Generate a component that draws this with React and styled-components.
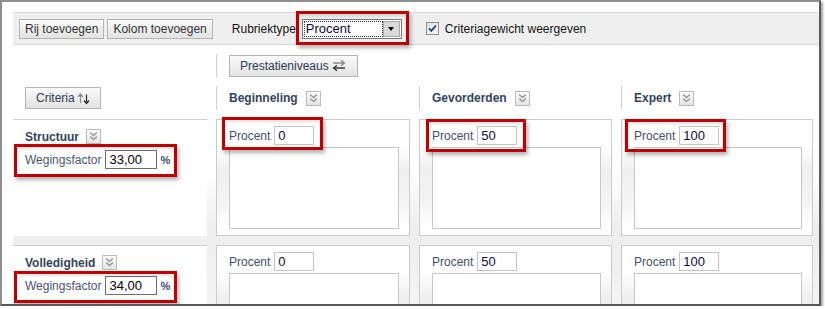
import React from "react";
import styled, { createGlobalStyle } from "styled-components";

const GlobalStyle = createGlobalStyle`
  html, body {
    margin: 0;
    padding: 0;
    background: #fff;
  }
  body {
    font-family: "Liberation Sans", Arial, sans-serif;
    font-size: 12px;
    color: #1a1a1a;
  }
`;

const COLS = "194px 194px 193px 192px";

// venster met donkere rand rechts/onder
const Frame = styled.div`
  box-sizing: border-box;
  width: 821px;
  height: 306px;
  border-top: 2px solid #8e8e8e;
  border-left: 2px solid #8e8e8e;
  border-right: 2px solid #5a5a5a;
  border-bottom: 2px solid #5a5a5a;
  box-shadow: 2px 2px 2px rgba(0, 0, 0, 0.35);
  overflow: hidden;
  background: #fff;
`;

const Toolbar = styled.div`
  margin: 10px 0 0 11px;
  height: 31px;
  display: flex;
  align-items: center;
  padding-left: 6px;
  background: #efefef;
  border-top: 1px solid #d8d8d8;
  border-bottom: 1px solid #d8d8d8;
`;

const Button = styled.button`
  box-sizing: border-box;
  height: ${(p) => p.$h || 20}px;
  padding: 0 ${(p) => p.$px || 5}px;
  margin-right: ${(p) => p.$mr || 0}px;
  display: inline-flex;
  align-items: center;
  gap: 2px;
  font: 12px "Liberation Sans", Arial, sans-serif;
  color: ${(p) => p.$color || "#333"};
  background: linear-gradient(#fafafa, #e3e3e3);
  border: 1px solid #b4b4b4;
  border-radius: 0;
  cursor: pointer;
`;

const ToolLabel = styled.span`
  margin-left: ${(p) => p.$ml || 0}px;
  margin-right: ${(p) => p.$mr || 0}px;
  color: #141414;
  white-space: nowrap;
`;

// rode markering (annotatie over de inhoud)
const Mark = styled.div`
  position: relative;
  display: flex;
  align-items: center;
  &::after {
    content: "";
    position: absolute;
    top: -${(p) => p.$i[0]}px;
    right: -${(p) => p.$i[1]}px;
    bottom: -${(p) => p.$i[2]}px;
    left: -${(p) => p.$i[3]}px;
    border: 3px solid #c00000;
    box-shadow: 2px 3px 4px rgba(0, 0, 0, 0.3), inset 1px 2px 3px rgba(0, 0, 0, 0.12);
    pointer-events: none;
  }
`;

const SelectBox = styled.div`
  box-sizing: border-box;
  width: 100px;
  height: 20px;
  display: flex;
  align-items: stretch;
  border: 1px solid #7a7a7a;
  background: #fff;
  padding: 1px;
`;

const SelectValue = styled.div`
  flex: 1;
  display: flex;
  align-items: center;
  padding-left: 2px;
  font-size: 13px;
  color: #0b0b3a;
  outline: 1px dotted #333;
  outline-offset: -1px;
`;

const SelectArrow = styled.div`
  width: 15px;
  display: flex;
  align-items: center;
  justify-content: center;
  background: #dadada;
  border: 1px solid #a8a8a8;
  &::before {
    content: "";
    border-left: 3.5px solid transparent;
    border-right: 3.5px solid transparent;
    border-top: 4px solid #000;
  }
`;

const CheckWrap = styled.span`
  display: inline-flex;
  margin-left: 24px;
  margin-right: 6px;
`;

const LevelsRow = styled.div`
  display: grid;
  grid-template-columns: ${COLS};
  column-gap: 9px;
  margin: 9px 0 0 11px;
`;

const HeadCell = styled.div`
  height: ${(p) => p.$h}px;
  display: flex;
  align-items: center;
  gap: 8px;
  padding-left: 12px;
  border-left: ${(p) => (p.$line ? "1px solid #cfcfcf" : "none")};
`;

const ColTitle = styled.span`
  font-weight: bold;
  color: #34435e;
`;

const RowGrid = styled.div`
  display: grid;
  grid-template-columns: ${COLS};
  grid-auto-rows: 117px;
  gap: 9px;
  margin: 9px 0 0 11px;
  background: linear-gradient(#fff 22%, #eeeeee 45%, #f3f3f3 75%, #fff 92%);
`;

const CriteriumCell = styled.div`
  background: #fff;
  border-top: 1px solid #cfcfcf;
  padding: 9px 0 0 12px;
`;

const CriteriumTitle = styled.div`
  height: 15px;
  display: flex;
  align-items: center;
  gap: 7px;
  font-weight: bold;
  color: #34435e;
`;

const WeightLine = styled(Mark)`
  margin-top: 6px;
  width: max-content;
  gap: 4px;
  color: #4a5572;
  &::after {
    display: ${(p) => (p.$on ? "block" : "none")};
  }
`;

const WeightInput = styled.input`
  box-sizing: border-box;
  width: 52px;
  height: 19px;
  padding: 0 3px;
  font: 13px "Liberation Sans", Arial, sans-serif;
  color: #000;
  border: 1px solid #6e6e6e;
`;

const Percent = styled.span`
  margin-left: -1px;
  font-size: 11px;
  font-weight: bold;
  color: #3b4a78;
`;

const LevelCell = styled.div`
  box-sizing: border-box;
  border: 1px solid #cbcbcb;
  padding: 6px 10px 0 12px;
  background: linear-gradient(#fff 22%, #efefef 45%, #f5f5f5 75%, #fff 92%);
`;

const ProcentLine = styled(Mark)`
  width: max-content;
  gap: 4px;
  color: #44506d;
  &::after {
    display: ${(p) => (p.$on ? "block" : "none")};
  }
`;

const ScoreInput = styled.input`
  box-sizing: border-box;
  width: 40px;
  height: 19px;
  padding: 0 3px;
  font: 13px "Liberation Sans", Arial, sans-serif;
  color: #0d0d45;
  border: 1px solid #c4c4c4;
`;

const Description = styled.textarea`
  display: block;
  box-sizing: border-box;
  width: 100%;
  height: 82px;
  margin-top: 2px;
  border: 1px solid #c8c8c8;
  background: #fff;
  resize: none;
  outline: none;
`;

const Chevrons = () => (
  <svg width="15" height="15" viewBox="0 0 15 15">
    <defs>
      <linearGradient id="chev" x1="0" y1="0" x2="0" y2="1">
        <stop offset="0" stopColor="#fdfdfd" />
        <stop offset="1" stopColor="#e4e4e4" />
      </linearGradient>
    </defs>
    <rect x="0.5" y="0.5" width="14" height="14" fill="url(#chev)" stroke="#bababa" />
    <path d="M4.2 3.6l3.3 2.9 3.3-2.9M4.2 7.6l3.3 2.9 3.3-2.9" fill="none" stroke="#9c9c9c" strokeWidth="1.5" />
  </svg>
);

const SortIcon = () => (
  <svg width="13" height="13" viewBox="0 0 13 13">
    <path d="M3.5 11V2.5M1 5l2.5-3L6 5" fill="none" stroke="#8a8a8a" strokeWidth="1.2" />
    <path d="M9.5 2.5V11M7 8.5l2.5 3 2.5-3" fill="none" stroke="#2a2a2a" strokeWidth="1.2" />
  </svg>
);

const SwapIcon = () => (
  <svg width="16" height="13" viewBox="0 0 16 13">
    <path d="M2 4h11M10 1.2L13.5 4 10 6.8" fill="none" stroke="#8a8a8a" strokeWidth="1.3" />
    <path d="M14 9H3M6 6.2L2.5 9 6 11.8" fill="none" stroke="#3a3a3a" strokeWidth="1.3" />
  </svg>
);

const CheckIcon = () => (
  <svg width="13" height="13" viewBox="0 0 13 13">
    <defs>
      <linearGradient id="cbx" x1="0" y1="0" x2="1" y2="1">
        <stop offset="0" stopColor="#dcdcdc" />
        <stop offset="1" stopColor="#fbfbfb" />
      </linearGradient>
    </defs>
    <rect x="0.5" y="0.5" width="12" height="12" fill="url(#cbx)" stroke="#8e8f8f" />
    <path d="M3 6.3l2.3 2.6L10 3.5" fill="none" stroke="#23388a" strokeWidth="1.7" />
  </svg>
);

const levels = ["Beginneling", "Gevorderden", "Expert"];

const criteria = [
  {
    name: "Structuur",
    weight: "33,00",
    mark: [6, 7, 8, 11],
    scores: [
      { value: "0", mark: [9, 9, 5, 7] },
      { value: "50", mark: [7, 9, 7, 6] },
      { value: "100", mark: [7, 7, 7, 9] },
    ],
  },
  {
    name: "Volledigheid",
    weight: "34,00",
    mark: [5, 7, 8, 11],
    scores: [{ value: "0" }, { value: "50" }, { value: "100" }],
  },
];

export default function App() {
  return (
    <>
      <GlobalStyle />
      <Frame>
        <Toolbar>
          <Button $mr={3}>Rij toevoegen</Button>
          <Button>Kolom toevoegen</Button>
          <ToolLabel $ml={19} $mr={6}>
            Rubriektype
          </ToolLabel>
          <Mark $i={[8, 7, 6, 6]}>
            <SelectBox>
              <SelectValue>Procent</SelectValue>
              <SelectArrow />
            </SelectBox>
          </Mark>
          <CheckWrap>
            <CheckIcon />
          </CheckWrap>
          <ToolLabel>Criteriagewicht weergeven</ToolLabel>
        </Toolbar>

        <LevelsRow>
          <div />
          <HeadCell $h={23} $line>
            <Button $h={22} $px={10} $color="#2f3b52">
              Prestatieniveaus <SwapIcon />
            </Button>
          </HeadCell>
        </LevelsRow>

        <LevelsRow>
          <HeadCell $h={24}>
            <Button $h={22} $px={10} $color="#2f3b52">
              Criteria
              <SortIcon />
            </Button>
          </HeadCell>
          {levels.map((l) => (
            <HeadCell key={l} $h={24} $line>
              <ColTitle>{l}</ColTitle>
              <Chevrons />
            </HeadCell>
          ))}
        </LevelsRow>

        <RowGrid>
          {criteria.map((c) => (
            <React.Fragment key={c.name}>
              <CriteriumCell>
                <CriteriumTitle>
                  {c.name}
                  <Chevrons />
                </CriteriumTitle>
                <WeightLine $on $i={c.mark}>
                  Wegingsfactor
                  <WeightInput defaultValue={c.weight} />
                  <Percent>%</Percent>
                </WeightLine>
              </CriteriumCell>
              {c.scores.map((s, i) => (
                <LevelCell key={i}>
                  <ProcentLine $on={!!s.mark} $i={s.mark || [0, 0, 0, 0]}>
                    Procent
                    <ScoreInput defaultValue={s.value} />
                  </ProcentLine>
                  <Description />
                </LevelCell>
              ))}
            </React.Fragment>
          ))}
        </RowGrid>
      </Frame>
    </>
  );
}
